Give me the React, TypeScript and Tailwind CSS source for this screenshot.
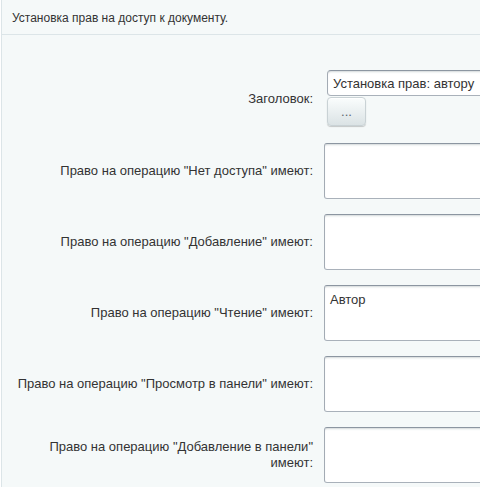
const labels = [
  'Право на операцию "Нет доступа" имеют:',
  'Право на операцию "Добавление" имеют:',
  'Право на операцию "Чтение" имеют:',
  'Право на операцию "Просмотр в панели" имеют:',
  'Право на операцию "Добавление в панели" имеют:',
]

const values: Record<number, string> = { 2: 'Автор' }

const field =
  'border border-[#a3abb4] border-t-[#8c96a1] border-b-[#a9b1ba] bg-white text-[13px] text-[#333] shadow-[inset_0_2px_2px_-1px_rgba(180,188,191,0.6)] outline-none'

export default function App() {
  return (
    <div className="h-[487px] w-[480px] overflow-hidden bg-white font-['Liberation_Sans',Arial,sans-serif]">
      <div className="ml-px h-full border-l border-[#dce5e8] bg-[#f5f9f9]">
        {/* Title */}
        <div className="flex h-[35px] items-center border-b border-[#dce5e8] pl-[10px] pt-[2px] text-[12px] text-[#333]">
          Установка прав на доступ к документу.
        </div>

        {/* Form */}
        <div className="flex flex-col gap-[15px] pt-[35px]">
          <div className="flex items-center">
            <div className="w-[311px] shrink-0 pl-[10px] text-right text-[13px] leading-4 text-[#333]">Заголовок:</div>
            <div className="ml-[14px] flex h-[58px] shrink-0 flex-col">
              <input
                defaultValue="Установка прав: автору"
                className={`h-[26px] w-[300px] rounded-[4px] px-[5px] ${field}`}
              />
              <button className="mt-px h-[29px] w-[39px] rounded-[4px] border border-[#c9d2d5] bg-linear-to-b from-[#fafdfd] to-[#dbe3e5] text-[13px] leading-none text-[#5b666e] shadow-[0_1px_1px_rgba(0,0,0,0.2),inset_0_1px_#fff]">
                ...
              </button>
            </div>
          </div>

          {labels.map((label, i) => (
            <div key={label} className="flex items-center">
              <div className="w-[311px] shrink-0 pl-[10px] text-right text-[13px] leading-4 text-[#333]">{label}</div>
              <textarea
                defaultValue={values[i] ?? ''}
                className={`ml-[11px] h-[56px] w-[300px] shrink-0 resize-none rounded-[3px] px-[5px] pt-[6px] leading-4 ${field}`}
              />
            </div>
          ))}
        </div>
      </div>
    </div>
  )
}
